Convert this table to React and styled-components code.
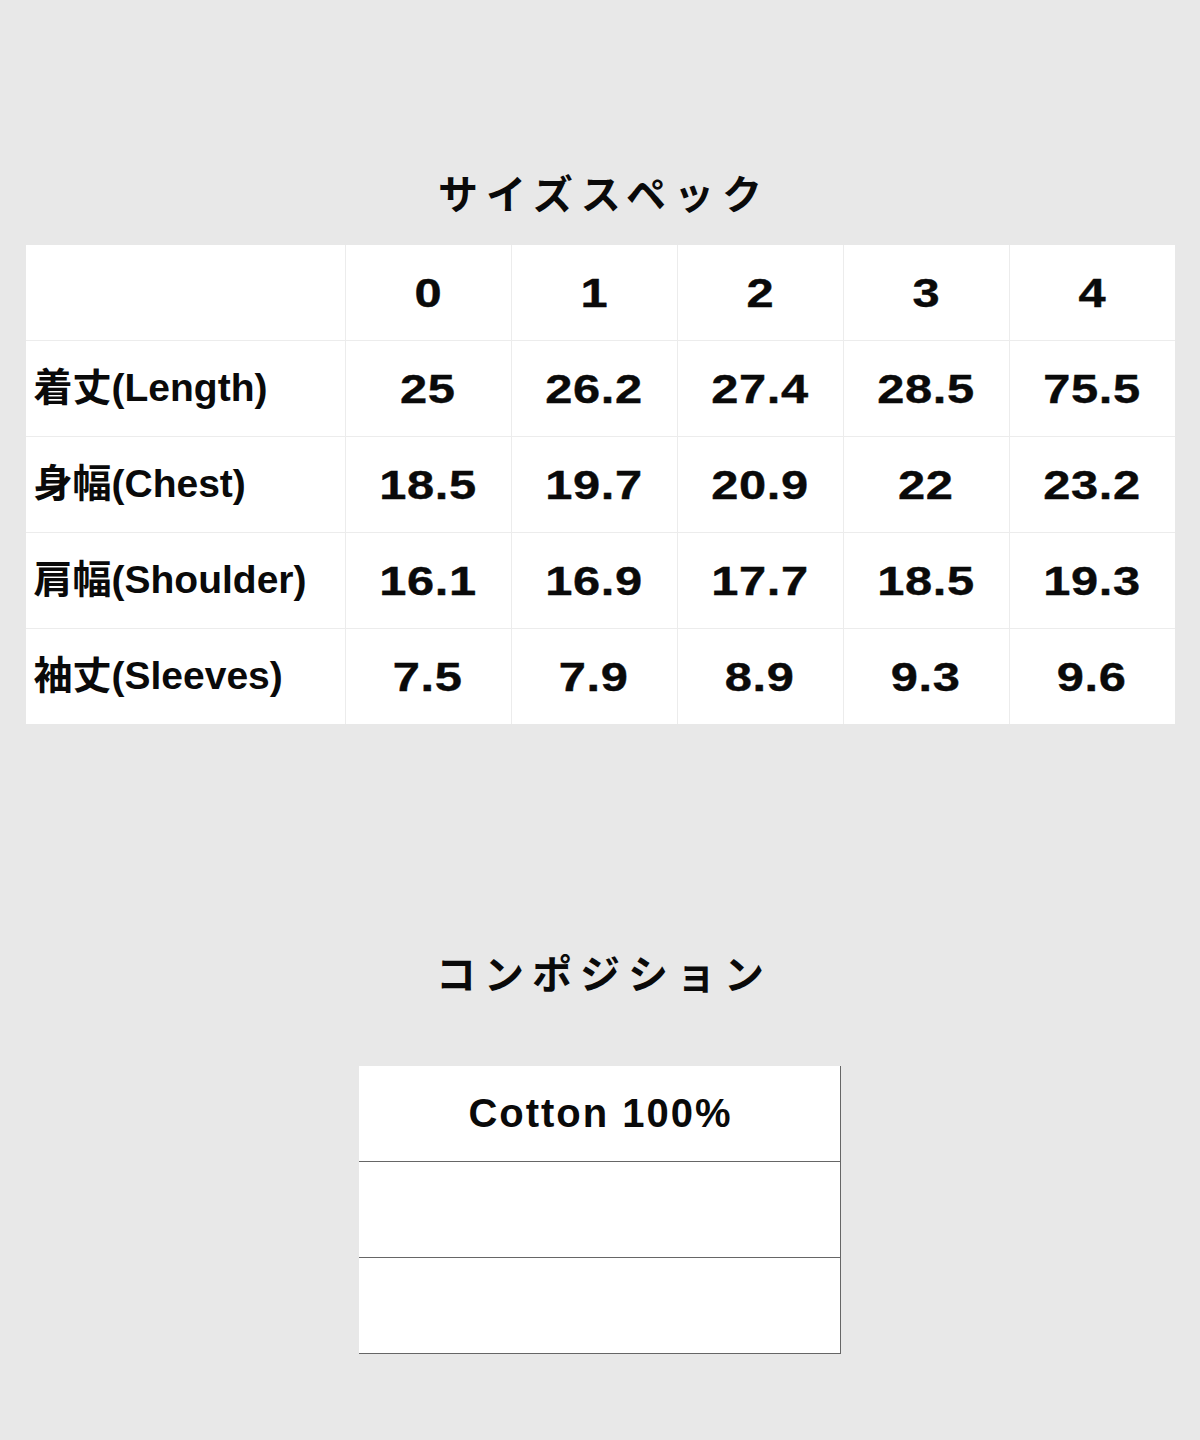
import React from "react";
import styled, { createGlobalStyle } from "styled-components";

const Global = createGlobalStyle`
  html, body { margin: 0; padding: 0; background: #e8e8e8; }
  body { font-family: "Liberation Sans", Arial, "Noto Sans CJK JP", sans-serif; color: #0a0a0a; }
`;

const Page = styled.div`
  width: 1200px;
  min-height: 1440px;
  padding-top: 162px;
  box-sizing: border-box;
  display: flex;
  flex-direction: column;
  align-items: center;
`;

const Heading = styled.h2`
  margin: 0 0 ${(p) => p.$gap}px;
  height: 60px;
  line-height: 60px;
  font-family: "Noto Sans CJK JP", sans-serif;
  font-weight: 700;
  font-size: 40px;
  letter-spacing: 8px;
  padding-left: 8px;
  text-align: center;
`;

const SpecGrid = styled.div`
  display: grid;
  grid-template-columns: 319px repeat(5, 165px);
  grid-auto-rows: 95px;
  gap: 1px;
  background: #ececec;
  width: 1149px;
`;

const Cell = styled.div`
  background: #fff;
  display: flex;
  align-items: center;
  justify-content: ${(p) => (p.$label ? "flex-start" : "center")};
  padding-left: ${(p) => (p.$label ? "8px" : "0")};
  padding-bottom: ${(p) => (p.$label ? "3px" : "0")};
  box-sizing: border-box;
  font-family: "Liberation Sans", Arial, "Noto Sans CJK JP", sans-serif;
  font-weight: 700;
  font-size: 39px;
  line-height: 1;
  white-space: nowrap;
`;

const Num = styled.span`
  display: inline-block;
  transform: scaleX(1.22);
  font-family: "Liberation Sans", Arial, sans-serif;
  font-weight: 700;
  font-size: 40px;
  letter-spacing: 0.5px;
  -webkit-text-stroke: 0.4px #0a0a0a;
`;

const Spacer = styled.div`
  height: ${(p) => p.$h}px;
`;

const CompTable = styled.div`
  width: 482px;
  background: #fff;
  border-right: 1px solid #666;
  box-sizing: border-box;
  display: flex;
  flex-direction: column;
`;

const CompRow = styled.div`
  height: 96px;
  box-sizing: border-box;
  border-bottom: 1px solid #666;
  display: flex;
  align-items: center;
  justify-content: center;
  font-family: "Liberation Sans", Arial, sans-serif;
  font-weight: 700;
  font-size: 40px;
  letter-spacing: 2px;
  padding-left: 2px;
`;

const sizes = ["0", "1", "2", "3", "4"];
const rows = [
  ["着丈(Length)", ["25", "26.2", "27.4", "28.5", "75.5"]],
  ["身幅(Chest)", ["18.5", "19.7", "20.9", "22", "23.2"]],
  ["肩幅(Shoulder)", ["16.1", "16.9", "17.7", "18.5", "19.3"]],
  ["袖丈(Sleeves)", ["7.5", "7.9", "8.9", "9.3", "9.6"]],
];

export default function App() {
  return (
    <>
      <Global />
      <Page>
        <Heading $gap={23}>サイズスペック</Heading>
        <SpecGrid>
          <Cell $label />
          {sizes.map((s) => (
            <Cell key={s}>
              <Num>{s}</Num>
            </Cell>
          ))}
          {rows.map(([label, vals]) => (
            <React.Fragment key={label}>
              <Cell $label>{label}</Cell>
              {vals.map((v, i) => (
                <Cell key={i}>
                  <Num>{v}</Num>
                </Cell>
              ))}
            </React.Fragment>
          ))}
        </SpecGrid>
        <Spacer $h={218} />
        <Heading $gap={64}>コンポジション</Heading>
        <CompTable>
          <CompRow>Cotton 100%</CompRow>
          <CompRow />
          <CompRow />
        </CompTable>
      </Page>
    </>
  );
}
